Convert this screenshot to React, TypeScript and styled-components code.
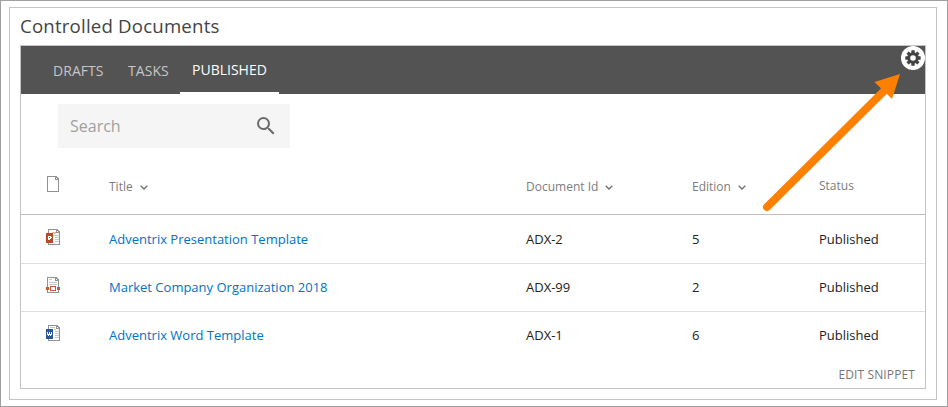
import React from "react";
import styled, { createGlobalStyle } from "styled-components";

const GlobalStyle = createGlobalStyle`
  * { box-sizing: border-box; }
  html, body { margin: 0; padding: 0; background: #fff; overflow: hidden; }
  body { font-family: "Open Sans", "Noto Sans", sans-serif; font-size: 13px; color: #222; }
`;

const Page = styled.div`
  position: relative;
  width: 948px;
  height: 407px;
  border: 1px solid #a0a0a0;
  padding: 6px 10px 6px 8px;
`;

const Frame = styled.section`
  height: 393px;
  border: 1px solid #c4c4c4;
  padding: 0 10px;
  display: flex;
  flex-direction: column;
`;

const Heading = styled.h1`
  margin: 0;
  height: 37px;
  line-height: 36px;
  font-size: 18.67px;
  font-weight: 400;
  letter-spacing: 0.18px;
  color: #444;
`;

const Panel = styled.div`
  height: 344px;
  border: 1px solid #c3c3c3;
  display: flex;
  flex-direction: column;
`;

const TabBar = styled.nav`
  flex: none;
  height: 48px;
  background: #535353;
  display: flex;
  justify-content: space-between;
`;

const TabList = styled.div`
  display: flex;
  padding-left: 20px;
`;

const Tab = styled.a<{ $active?: boolean; $width: number }>`
  width: ${(p) => p.$width}px;
  height: 48px;
  padding-left: 12px;
  line-height: ${(p) => (p.$active ? 48 : 50)}px;
  font-size: 14px;
  white-space: nowrap;
  letter-spacing: ${(p) => (p.$active ? 0 : "0.05px")};
  color: ${(p) => (p.$active ? "#fff" : "#c6c6c6")};
  border-bottom: ${(p) => (p.$active ? "2px solid #fff" : "none")};
`;

const GearButton = styled.button`
  width: 24px;
  height: 24px;
  padding: 0;
  border: 0;
  border-radius: 50%;
  background: #fff;
  display: flex;
  align-items: center;
  justify-content: center;
`;

const SearchBox = styled.div`
  flex: none;
  width: 232px;
  height: 44px;
  margin: 10px 0 0 37px;
  padding: 0 12px;
  background: #f5f5f5;
  color: #a0a0a0;
  font-size: 16px;
  display: flex;
  align-items: center;
  justify-content: space-between;
`;

const Row = styled.div<{ $head?: boolean; $height: number; $last?: boolean }>`
  flex: none;
  height: ${(p) => p.$height}px;
  display: grid;
  grid-template-columns: 63px 417px 166px 127px 1fr;
  padding-left: 25px;
  border-bottom: ${(p) => (p.$last ? "0" : p.$head ? "1px solid #bfbfbf" : "1px solid #dedede")};
`;

const IconCell = styled.div<{ $top: number }>`
  padding-top: ${(p) => p.$top}px;
  line-height: 0;
`;

const HeadCell = styled.div<{ $top?: number }>`
  display: flex;
  gap: 7px;
  padding-top: ${(p) => p.$top ?? 30}px;
  line-height: 18px;
  font-size: 12px;
  color: #7c7c7c;
  white-space: nowrap;
`;

const Chevron = styled.svg`
  margin-top: 7px;
`;

const Cell = styled.div<{ $line: number }>`
  line-height: ${(p) => p.$line}px;
  white-space: nowrap;
`;

const DocLink = styled.a<{ $line: number }>`
  line-height: ${(p) => p.$line}px;
  white-space: nowrap;
  color: #0072c6;
`;

const Footer = styled.footer`
  display: flex;
  justify-content: flex-end;
  padding: 6px 10px 0 0;
  font-size: 12px;
  letter-spacing: 0.12px;
  line-height: 18px;
  color: #767676;
`;

const Arrow = styled.svg`
  position: absolute;
  left: 759px;
  top: 69px;
  pointer-events: none;
`;

type Kind = "blank" | "ppt" | "visio" | "word";

function FileIcon({ kind }: { kind: Kind }) {
  const office = kind === "ppt" || kind === "word";
  const x = office ? 2 : 1;
  return (
    <svg width="14" height="16" viewBox="0 0 14 16" shapeRendering="crispEdges">
      <path d={`M${x} 0h9v1h1v1h1v1h-1v13h-10z`} fill="none" />
      <path d={`M${x} 0h10v1h1v1h1v14h-12z`} fill="#929292" />
      <path d={`M${x + 1} 1h7v3h3v11h-10z`} fill="#fff" />
      <path d={`M${x + 9} 2h1v1h-1z`} fill="#fff" />
      {office && <path d="M8 4h2v1h-2zM9 6h4v1h-4zM9 8h4v1h-4zM9 10h4v1h-4zM9 12h4v1h-4z" fill="#c8c8c8" />}
      {kind === "ppt" && (
        <>
          <path d="M6 3h2v1h-2zM8 3h2v2h-2zM7 6h3v1h-3z" fill="#dfb5a5" />
          <path d="M0 4h7v10h-7z" fill="#bd472a" />
          <path d="M2 7h3v1h1v1h-1v1h-1.500v1h-1.500z" fill="#fff" />
          <path d="M3 8h1v1h-1z" fill="#bd472a" />
        </>
      )}
      {kind === "word" && (
        <>
          <path d="M4 2h5v1h-5z" fill="#c8c8c8" />
          <path d="M0 4h7v10h-7z" fill="#2b579a" />
          <path d="M1 7h1v2h1v-2h1v2h1v-2h1v3h-1v1h-1v-1h-1v1h-1v-1h-1z" fill="#fff" />
        </>
      )}
      {kind === "visio" && (
        <>
          <path d="M3 2h3v1h-3zM3 5h8v1h-8zM3 7h8v1h-8z" fill="#c8c8c8" />
          <path d="M3 8h8v7h-8z" fill="#fff" />
          <path d="M0 10h3v3h-3zM11 10h3v3h-3zM4 9h6v5h-6zM5 10v3h4v-3z" fill="#d35230" fillRule="evenodd" />
        </>
      )}
    </svg>
  );
}

function SortHeader({ label }: { label: string }) {
  return (
    <HeadCell>
      {label}
      <Chevron width="8" height="5" viewBox="0 0 8 5">
        <path d="M.7.8 4 4 7.300.8" fill="none" stroke="#707070" strokeWidth="1.3" />
      </Chevron>
    </HeadCell>
  );
}

const documents: { kind: Kind; title: string; id: string; edition: number; status: string }[] = [
  { kind: "ppt", title: "Adventrix Presentation Template", id: "ADX-2", edition: 5, status: "Published" },
  { kind: "visio", title: "Market Company Organization 2018", id: "ADX-99", edition: 2, status: "Published" },
  { kind: "word", title: "Adventrix Word Template", id: "ADX-1", edition: 6, status: "Published" },
];

export default function App() {
  return (
    <>
      <GlobalStyle />
      <Page>
        <Frame>
          <Heading>Controlled Documents</Heading>
          <Panel>
            <TabBar>
              <TabList>
                <Tab $width={75}>DRAFTS</Tab>
                <Tab $width={64}>TASKS</Tab>
                <Tab $width={99} $active>PUBLISHED</Tab>
              </TabList>
              <GearButton aria-label="Settings">
                <svg width="16" height="16" viewBox="-8 -8 16 16">
                  <g fill="#444">
                    {[0, 45, 90, 135].map((a) => (
                      <rect key={a} x="-1.7" y="-7.7" width="3.4" height="15.4" rx=".5" transform={`rotate(${a})`} />
                    ))}
                    <circle r="5.8" />
                  </g>
                  <circle r="2.8" fill="#fff" />
                </svg>
              </GearButton>
            </TabBar>
            <SearchBox>
              Search
              <svg width="24" height="24" viewBox="0 0 24 24" fill="#6b6b6b">
                <path d="M15.5 14h-.79l-.28-.27A6.47 6.47 0 0 0 16 9.5 6.5 6.5 0 1 0 9.5 16c1.61 0 3.09-.59 4.23-1.57l.27.28v.79l5 4.99L20.49 19l-4.99-5zm-6 0C7.01 14 5 11.99 5 9.5S7.01 5 9.5 5 14 7.01 14 9.5 11.99 14 9.5 14z" />
              </svg>
            </SearchBox>
            <Row $head $height={67}>
              <IconCell $top={28}><FileIcon kind="blank" /></IconCell>
              <SortHeader label="Title" />
              <SortHeader label="Document Id" />
              <SortHeader label="Edition" />
              <HeadCell $top={29}>Status</HeadCell>
            </Row>
            {documents.map((doc, i) => {
              const line = i === 0 ? 48 : 46;
              return (
                <Row key={doc.id} $height={i === 0 ? 49 : 48} $last={i === documents.length - 1}>
                  <IconCell $top={i === 0 ? 14 : 13}><FileIcon kind={doc.kind} /></IconCell>
                  <DocLink $line={line}>{doc.title}</DocLink>
                  <Cell $line={line}>{doc.id}</Cell>
                  <Cell $line={line}>{doc.edition}</Cell>
                  <Cell $line={line}>{doc.status}</Cell>
                </Row>
              );
            })}
            <Footer>EDIT SNIPPET</Footer>
          </Panel>
        </Frame>
        <Arrow width="150" height="150" viewBox="760 70 150 150">
          <path d="M767 207 886 89" stroke="#ff8000" strokeWidth="8" strokeLinecap="round" />
          <path d="M900 74 874.500 82 892 99z" fill="#ff8000" />
        </Arrow>
      </Page>
    </>
  );
}
